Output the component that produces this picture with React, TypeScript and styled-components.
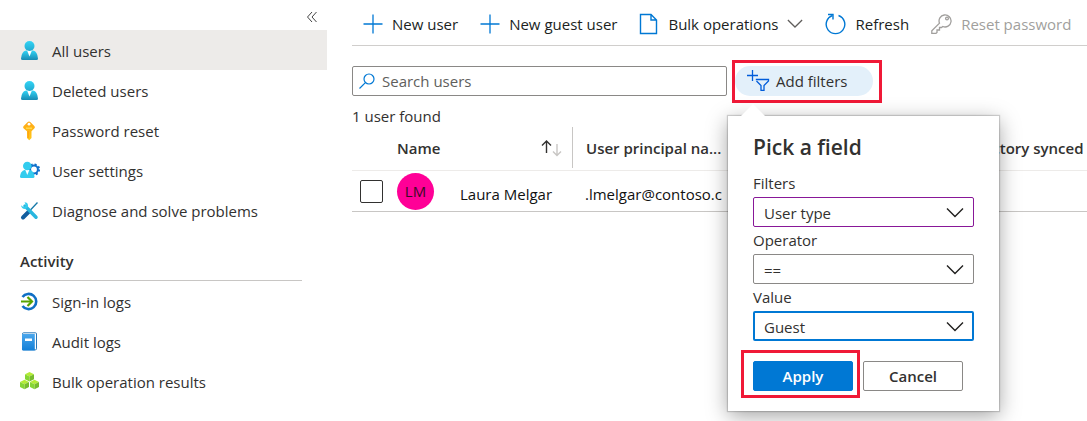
import React from "react";
import styled, { createGlobalStyle } from "styled-components";

const GlobalStyle = createGlobalStyle`
  *, *::before, *::after { box-sizing: border-box; }
  body {
    margin: 0;
    background: #fff;
    color: #323130;
    font-family: "Open Sans", "Noto Sans", sans-serif;
    font-size: 15px;
    line-height: 20px;
    overflow-x: hidden;
  }
  button, input, select { font: inherit; color: inherit; }
`;

const Page = styled.div`
  display: flex;
  min-height: 100vh;
`;

/* ---------- Sidebar ---------- */

const Sidebar = styled.nav`
  flex: 0 0 327px;
`;

const SidebarTop = styled.div`
  display: flex;
  justify-content: flex-end;
  height: 30px;
  padding: 4px 2px 0 0;
`;

const CollapseButton = styled.button`
  display: grid;
  place-items: center;
  width: 26px;
  height: 26px;
  padding: 0;
  border: 0;
  background: none;
`;

const NavList = styled.ul`
  margin: 0;
  padding: 0;
  list-style: none;
`;

const NavLink = styled.a<{ $active?: boolean }>`
  display: flex;
  align-items: center;
  gap: 12px;
  height: 40px;
  padding: 2px 20px 0;
  background: ${(p) => (p.$active ? "#edebe9" : "transparent")};
  color: inherit;
  text-decoration: none;

  svg { flex: none; }
`;

const NavHeading = styled.h2`
  margin: 20px 25px 0 20px;
  padding: 1px 0 9px;
  border-bottom: 1px solid #c8c6c4;
  font-size: 15px;
  line-height: 20px;
  font-weight: 600;
`;

/* ---------- Main column ---------- */

const Main = styled.main`
  flex: 1;
  min-width: 0;
  padding-left: 25px;
`;

const Toolbar = styled.div`
  display: flex;
  gap: 22px;
  height: 46px;
  padding: 2px 0 0 11px;
  border-bottom: 1px solid #d0cecc;
`;

const ToolbarButton = styled.button`
  display: flex;
  align-items: center;
  gap: 9px;
  padding: 0;
  border: 0;
  background: none;
  white-space: nowrap;
  color: #201f1e;

  &:disabled { color: #a19f9d; }
  svg { flex: none; }
`;

const FilterRow = styled.div`
  display: flex;
  align-items: flex-start;
  gap: 5px;
  padding-top: 14px;
`;

const SearchBox = styled.label`
  display: flex;
  align-items: center;
  gap: 7px;
  flex: 0 1 375px;
  height: 30px;
  margin-top: 6px;
  padding: 0 6px;
  border: 1px solid #8a8886;
  border-radius: 2px;

  input {
    flex: 1;
    min-width: 0;
    padding: 0;
    border: 0;
    outline: 0;
    background: none;
  }
  input::placeholder { color: #605e5c; opacity: 1; }
`;

const FilterAnchor = styled.div`
  position: relative;
  padding: 3px 6px 4px 0;
  border: 3px solid #f01937;
`;

const FilterPill = styled.button`
  display: flex;
  align-items: center;
  gap: 6px;
  height: 30px;
  padding: 0 26px 0 12px;
  border: 0;
  border-radius: 15px;
  background: #e3f0fa;
  white-space: nowrap;
`;

const ResultCount = styled.p`
  margin: 0;
  padding: 3px 0 1px;
`;

/* ---------- Users table ---------- */

const UsersTable = styled.table`
  width: 100%;
  table-layout: fixed;
  border-spacing: 0;
  text-align: left;
`;

const HeadCell = styled.th`
  padding: 0 0 2px;
  border-bottom: 1px solid #edebe9;
  font-weight: 600;
  white-space: nowrap;
`;

const HeadContent = styled.div<{ $divided?: boolean }>`
  display: flex;
  align-items: center;
  justify-content: space-between;
  height: 41px;
  padding: 0 10px 0 ${(p) => (p.$divided ? "13px" : "0")};
  border-left: ${(p) => (p.$divided ? "1px solid #c8c6c4" : "0")};
`;

const BodyCell = styled.td<{ $text?: boolean }>`
  height: 41px;
  padding: ${(p) => (p.$text ? "6px 0 0" : "0")};
  border-bottom: 1px solid #c8c6c4;
  color: #111;
  white-space: nowrap;
  vertical-align: middle;
`;

const Email = styled.span`
  padding-left: 13px;
`;

const RowCheck = styled.input`
  display: block;
  appearance: none;
  width: 23px;
  height: 23px;
  margin: 0 0 0 8px;
  border: 1px solid #323130;
  border-radius: 2px;
  background: #fff;
`;

const Avatar = styled.span`
  display: grid;
  place-items: center;
  width: 37px;
  height: 37px;
  border-radius: 50%;
  background: #ff0097;
  color: #3b0a26;
`;

/* ---------- Filter callout ---------- */

const Callout = styled.form`
  position: absolute;
  z-index: 2;
  top: 53px;
  left: -7px;
  width: 271px;
  padding: 17px 25px 13px;
  background: #fff;
  box-shadow: 0 0 1px 1px rgba(0, 0, 0, 0.16), 0 5px 20px rgba(0, 0, 0, 0.36);
`;

const CalloutBeak = styled.svg`
  position: absolute;
  top: -12px;
  left: 11px;
`;

const CalloutTitle = styled.h3`
  margin: 0 0 12px;
  font-size: 21px;
  line-height: 28px;
  font-weight: 600;
`;

const Field = styled.div`
  margin-bottom: 3px;

  label { display: block; margin-bottom: 4px; }
`;

const SelectWrap = styled.div`
  position: relative;

  svg {
    position: absolute;
    top: 10px;
    right: 10px;
    pointer-events: none;
  }
`;

const Select = styled.select<{ $tone: "visited" | "plain" | "focused" }>`
  display: block;
  appearance: none;
  width: 100%;
  height: 30px;
  padding: 2px 32px 0 ${(p) => (p.$tone === "focused" ? "9px" : "10px")};
  border: ${(p) =>
    ({
      visited: "1px solid #881798",
      plain: "1px solid #8a8886",
      focused: "2px solid #0078d4",
    })[p.$tone]};
  border-radius: 2px;
  background: #fff;
`;

const Actions = styled.div`
  display: flex;
  align-items: flex-start;
  gap: 3px;
  margin: 9px 0 0 -12px;
`;

const ApplyFrame = styled.div`
  padding: 8px 4px 4px 9px;
  border: 3px solid #f01937;
`;

const ActionButton = styled.button<{ $primary?: boolean }>`
  width: 100px;
  height: 30px;
  margin-top: ${(p) => (p.$primary ? "0" : "11px")};
  padding: 0;
  border: 1px solid ${(p) => (p.$primary ? "#0078d4" : "#8a8886")};
  border-radius: 2px;
  background: ${(p) => (p.$primary ? "#0078d4" : "#fff")};
  color: ${(p) => (p.$primary ? "#fff" : "#323130")};
  font-weight: 600;
`;

/* ---------- Icons ---------- */

const PersonIcon = () => (
  <svg width="20" height="20" viewBox="0 0 20 20">
    <defs>
      <linearGradient id="person" x1="0" y1="0" x2="0" y2="1">
        <stop offset="0" stopColor="#32d4f5" />
        <stop offset="1" stopColor="#198ab3" />
      </linearGradient>
      <linearGradient id="personHead" x1="0" y1="0" x2="0" y2="1">
        <stop offset="0" stopColor="#32d4f5" />
        <stop offset="1" stopColor="#22a9d0" />
      </linearGradient>
    </defs>
    <path d="M1 17.4Q1.600 10.500 6 9.500H13Q17.400 10.500 18 17.400Q18 19 16.500 19H2.500Q1 19 1 17.400Z" fill="url(#person)" />
    <path d="M7 9.300L9.500 15.500L12 9.300Z" fill="#fff" />
    <circle cx="9.500" cy="5" r="5" fill="url(#personHead)" />
  </svg>
);

const KeyIcon = () => (
  <svg width="20" height="20" viewBox="0 0 20 20">
    <defs>
      <linearGradient id="key" x1="0" y1="0" x2="0" y2="1">
        <stop offset="0" stopColor="#ffa815" />
        <stop offset="1" stopColor="#ffc91a" />
      </linearGradient>
    </defs>
    <path d="M7.500 1.200Q9 -.2 10.500 1.200L14.300 5Q15.500 6.300 14.300 7.500L11.500 10.300V17L9.200 19.200L7 17V10.300L3.700 7.500Q2.500 6.300 3.700 5Z" fill="url(#key)" />
    <path d="M6 6.500H12V8H6Z" fill="#ffd84a" />
    <path d="M8.200 10V17" stroke="#ff9a12" />
    <circle cx="9" cy="3.200" r="1.400" fill="#fff" />
  </svg>
);

const UserSettingsIcon = () => (
  <svg width="20" height="20" viewBox="0 0 20 20">
    <circle cx="14" cy="8.500" r="3.900" fill="none" stroke="#0f6fcb" strokeWidth="2" />
    <circle cx="14" cy="8.500" r="5.200" fill="none" stroke="#0f6fcb" strokeWidth="1.800" strokeDasharray="2.040 2.040" />
    <path d="M0 15.500Q.6 10 4.500 9H10Q14 10 14.500 15.500Q14.500 17 13 17H1.500Q0 17 0 15.500Z" fill="#32ccee" />
    <path d="M5.300 9L7.300 14L9.300 9Z" fill="#fff" />
    <circle cx="7.300" cy="5" r="4.300" fill="#32ccee" />
  </svg>
);

const ToolsIcon = () => (
  <svg width="20" height="20" viewBox="0 0 20 20">
    <path d="M17.500 1.500L9 10.500" stroke="#1678a8" strokeWidth="1.300" />
    <path d="M9 10.500L3 16.500" stroke="#135e9f" strokeWidth="4" strokeLinecap="round" />
    <path d="M5 5L16 16.200" stroke="#28b6df" strokeWidth="3.500" strokeLinecap="round" />
    <path d="M4.500 1.200Q7.800 1.200 8 4.500L7.500 6.500L5 8Q1.500 8 1 4.300L3.300 6L5.300 5.500L5.700 3.500Z" fill="#32ccee" />
  </svg>
);

const SignInIcon = () => (
  <svg width="20" height="20" viewBox="0 0 20 20" fill="none">
    <path d="M2.500 5A7.600 7.600 0 1 1 2.500 14" stroke="#0f6fc5" strokeWidth="2.600" />
    <path d="M1 9.500H12" stroke="#57a300" strokeWidth="2" />
    <path d="M7.500 5L12 9.500L7.500 14" stroke="#57a300" strokeWidth="2.200" />
  </svg>
);

const BookIcon = () => (
  <svg width="20" height="20" viewBox="0 0 20 20">
    <defs>
      <linearGradient id="book" x1="0" y1="0" x2="0" y2="1">
        <stop offset="0" stopColor="#4aa6ec" />
        <stop offset="1" stopColor="#1380d8" />
      </linearGradient>
    </defs>
    <rect x="2.500" y=".8" width="14" height="17" rx="1" fill="#fff" stroke="#2a78b8" />
    <path d="M2 2H14.800V18.500H3Q2 18.500 2 17.500Z" fill="url(#book)" />
    <rect x="5" y="6.500" width="7" height="2.500" fill="#fff" />
  </svg>
);

const Cube = ({ x, y }: { x: number; y: number }) => (
  <g transform={`translate(${x} ${y})`}>
    <path d="M4.500 0L9 2.300L4.500 4.600L0 2.300Z" fill="#b4ec36" />
    <path d="M0 2.300L4.500 4.600V9.500L0 7.200Z" fill="#86d633" />
    <path d="M9 2.300L4.500 4.600V9.500L9 7.200Z" fill="#76bc2d" />
  </g>
);

const CubesIcon = () => (
  <svg width="20" height="20" viewBox="0 0 20 20">
    <Cube x={5} y={0} />
    <Cube x={0} y={7.700} />
    <Cube x={10} y={7.700} />
  </svg>
);

const PlusIcon = () => (
  <svg width="20" height="20" viewBox="0 0 20 20" stroke="#0078d4" strokeWidth="1.300">
    <path d="M10 .5V19.500M.5 10H19.500" />
  </svg>
);

const DocumentIcon = () => (
  <svg width="20" height="22" viewBox="0 0 20 22" fill="none" stroke="#0078d4" strokeWidth="1.400">
    <path d="M1.500 1.500H12L17.500 7V20.500H1.500ZM12 1.500V7H17.500" />
  </svg>
);

const RefreshIcon = () => (
  <svg width="21" height="22" viewBox="0 0 21 22" fill="none" stroke="#0078d4" strokeWidth="1.400">
    <path d="M13.500 2.500A9.300 9.300 0 1 1 7.500 2.500" />
    <path d="M3 1.500H8V6.500" />
  </svg>
);

const ResetKeyIcon = () => (
  <svg width="21" height="21" viewBox="1 0 21 21" fill="none" stroke="#a19f9d" strokeWidth="1.300">
    <path d="M9.500 10.200A6 6 0 1 1 12.800 13.500L11.500 14.500H9.500V17H7V19.500L6 20.300H1.800V17.800Z" />
    <circle cx="17" cy="5.500" r="1.400" />
  </svg>
);

const SearchIcon = () => (
  <svg width="16" height="16" viewBox="0 0 16 16" fill="none" stroke="#0078d4" strokeWidth="1.200">
    <circle cx="10" cy="6" r="5" />
    <path d="M6.400 9.600L.5 15.500" />
  </svg>
);

const AddFilterIcon = () => (
  <svg width="23" height="22" viewBox="0 0 23 22" fill="none" stroke="#015cda" strokeWidth="1.300">
    <path d="M5.500 0V11M0 5.500H11" />
    <path d="M8.800 9.500H21.500V11L17 15.500V20.300H14V15.500L9.500 11" />
  </svg>
);

const ChevronDown = ({ wide }: { wide?: boolean }) => (
  <svg width={wide ? 18 : 16} height="11" viewBox="0 0 18 11" fill="none" stroke={wide ? "#201f1e" : "#605e5c"} strokeWidth="1.400">
    <path d="M1 1.500L9 9.500L17 1.500" />
  </svg>
);

const CollapseIcon = () => (
  <svg width="12" height="12" viewBox="0 0 12 12" fill="none" stroke="#444" strokeWidth="1">
    <path d="M6 1L1.500 6L6 11M10.500 1L6 6L10.500 11" />
  </svg>
);

const SortIcon = () => (
  <svg width="21" height="18" viewBox="0 0 21 18" fill="none" strokeWidth="1.400">
    <path d="M5.500 14V2M1 6.500L5.500 2L10 6.500" stroke="#323130" />
    <path d="M16 5V16.500M12 12.500L16 16.500L20 12.500" stroke="#c8c6c4" />
  </svg>
);

/* ---------- Page ---------- */

const manageLinks = [
  { label: "All users", icon: <PersonIcon />, active: true },
  { label: "Deleted users", icon: <PersonIcon /> },
  { label: "Password reset", icon: <KeyIcon /> },
  { label: "User settings", icon: <UserSettingsIcon /> },
  { label: "Diagnose and solve problems", icon: <ToolsIcon /> },
];

const activityLinks = [
  { label: "Sign-in logs", icon: <SignInIcon /> },
  { label: "Audit logs", icon: <BookIcon /> },
  { label: "Bulk operation results", icon: <CubesIcon /> },
];

const filterFields = [
  { id: "filter-field", label: "Filters", value: "User type", tone: "visited" },
  { id: "filter-operator", label: "Operator", value: "==", tone: "plain" },
  { id: "filter-value", label: "Value", value: "Guest", tone: "focused" },
] as const;

const NavItems = ({ items }: { items: { label: string; icon: React.ReactNode; active?: boolean }[] }) => (
  <NavList>
    {items.map((item) => (
      <li key={item.label}>
        <NavLink href="#" $active={item.active}>
          {item.icon}
          {item.label}
        </NavLink>
      </li>
    ))}
  </NavList>
);

export default function App() {
  return (
    <>
      <GlobalStyle />
      <Page>
        <Sidebar>
          <SidebarTop>
            <CollapseButton aria-label="Collapse menu">
              <CollapseIcon />
            </CollapseButton>
          </SidebarTop>
          <NavItems items={manageLinks} />
          <NavHeading>Activity</NavHeading>
          <NavItems items={activityLinks} />
        </Sidebar>

        <Main>
          <Toolbar>
            <ToolbarButton><PlusIcon />New user</ToolbarButton>
            <ToolbarButton><PlusIcon />New guest user</ToolbarButton>
            <ToolbarButton><DocumentIcon />Bulk operations<ChevronDown /></ToolbarButton>
            <ToolbarButton><RefreshIcon />Refresh</ToolbarButton>
            <ToolbarButton disabled><ResetKeyIcon />Reset password</ToolbarButton>
          </Toolbar>

          <FilterRow>
            <SearchBox>
              <SearchIcon />
              <input type="text" placeholder="Search users" aria-label="Search users" />
            </SearchBox>
            <FilterAnchor>
              <FilterPill><AddFilterIcon />Add filters</FilterPill>
              <Callout onSubmit={(e) => e.preventDefault()}>
                <CalloutBeak width="28" height="14" viewBox="0 0 28 14">
                  <path d="M0 14L14 0L28 14Z" fill="#fff" />
                </CalloutBeak>
                <CalloutTitle>Pick a field</CalloutTitle>
                {filterFields.map((f) => (
                  <Field key={f.id}>
                    <label htmlFor={f.id}>{f.label}</label>
                    <SelectWrap>
                      <Select id={f.id} $tone={f.tone} defaultValue={f.value}>
                        <option>{f.value}</option>
                      </Select>
                      <ChevronDown wide />
                    </SelectWrap>
                  </Field>
                ))}
                <Actions>
                  <ApplyFrame>
                    <ActionButton type="submit" $primary>Apply</ActionButton>
                  </ApplyFrame>
                  <ActionButton type="button">Cancel</ActionButton>
                </Actions>
              </Callout>
            </FilterAnchor>
          </FilterRow>

          <ResultCount>1 user found</ResultCount>

          <UsersTable>
            <colgroup>
              <col width="45" />
              <col width="63" />
              <col width="112" />
              <col width="376" />
              <col />
            </colgroup>
            <thead>
              <tr>
                <HeadCell />
                <HeadCell colSpan={2}>
                  <HeadContent>Name<SortIcon /></HeadContent>
                </HeadCell>
                <HeadCell>
                  <HeadContent $divided>User principal na...</HeadContent>
                </HeadCell>
                <HeadCell>
                  <HeadContent $divided>Directory synced</HeadContent>
                </HeadCell>
              </tr>
            </thead>
            <tbody>
              <tr>
                <BodyCell><RowCheck type="checkbox" aria-label="Select Laura Melgar" /></BodyCell>
                <BodyCell><Avatar>LM</Avatar></BodyCell>
                <BodyCell $text>Laura Melgar</BodyCell>
                <BodyCell $text><Email>.lmelgar@contoso.c</Email></BodyCell>
                <BodyCell />
              </tr>
            </tbody>
          </UsersTable>
        </Main>
      </Page>
    </>
  );
}
